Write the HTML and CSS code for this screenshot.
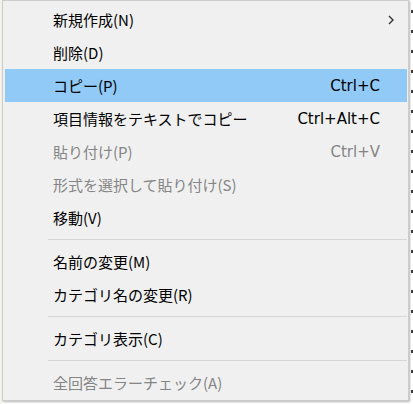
FILE: index.html
```html
<!DOCTYPE html>
<html lang="ja">
<head>
  <meta charset="UTF-8">
  <title>Context Menu</title>
  <link rel="stylesheet" href="styles.css">
</head>
<body>

<div class="page">
  <div class="edge-left"></div>

  <ul class="menu">
    <li class="item">
      <span class="label">新規作成(N)</span>
      <span class="key"></span>
      <svg class="arrow" width="6" height="10" viewBox="0 0 6 10"><path d="M1 1 L5 5 L1 9" fill="none" stroke="#333" stroke-width="1.4"/></svg>
    </li>
    <li class="item"><span class="label">削除(D)</span></li>
    <li class="item active"><span class="label">コピー(P)</span><span class="key">Ctrl+C</span></li>
    <li class="item"><span class="label">項目情報をテキストでコピー</span><span class="key">Ctrl+Alt+C</span></li>
    <li class="item disabled"><span class="label">貼り付け(P)</span><span class="key">Ctrl+V</span></li>
    <li class="item disabled"><span class="label">形式を選択して貼り付け(S)</span></li>
    <li class="item"><span class="label">移動(V)</span></li>
    <li class="sep"></li>
    <li class="item"><span class="label">名前の変更(M)</span></li>
    <li class="item"><span class="label">カテゴリ名の変更(R)</span></li>
    <li class="sep"></li>
    <li class="item"><span class="label">カテゴリ表示(C)</span></li>
    <li class="sep"></li>
    <li class="item disabled"><span class="label">全回答エラーチェック(A)</span></li>
  </ul>

  <div class="edge-right"></div>
</div>

</body>
</html>
```

FILE: styles.css
```css
body {
  margin: 0;
  background: #ffffff;
  font-family: "Noto Sans CJK JP", sans-serif;
  font-size: 15px;
}

.page {
  display: flex;
  width: 413px;
  height: 404px;
  overflow: hidden;
}

.edge-left {
  width: 2px;
  background: #f6f3ee;
}

.edge-right {
  flex: 1;
  background: repeating-linear-gradient(to bottom, #ffffff 0 10px, #3a3a3a 10px 13px, #ffffff 13px 20px);
  background-size: 2px 100%;
  background-repeat: no-repeat;
  background-position: right top;
}

/* menu box */
.menu {
  list-style: none;
  margin: 0;
  width: 402px;
  height: 397px;
  padding: 2px 1px 0 2px;
  background: #f0f0f0;
  border: 1px solid #cccccc;
  box-shadow: 1px 1px 2px rgba(0, 0, 0, 0.3);
}

.item {
  display: grid;
  grid-template-columns: 1fr auto 27px;
  align-items: center;
  height: 33px;
  padding-left: 48px;
  color: #000000;
  white-space: nowrap;
}

.item .key {
  font-family: "DejaVu Sans", sans-serif;
  font-size: 15px;
}

.item.active {
  background: #91c9f7;
}

.item.disabled {
  color: #858585;
}

.arrow {
  grid-column: 3;
  margin-left: 8px;
}

.sep {
  height: 11px;
  margin-left: 43px;
  background: linear-gradient(#d6d6d6, #d6d6d6) no-repeat 0 5px / 100% 1px;
}
```
